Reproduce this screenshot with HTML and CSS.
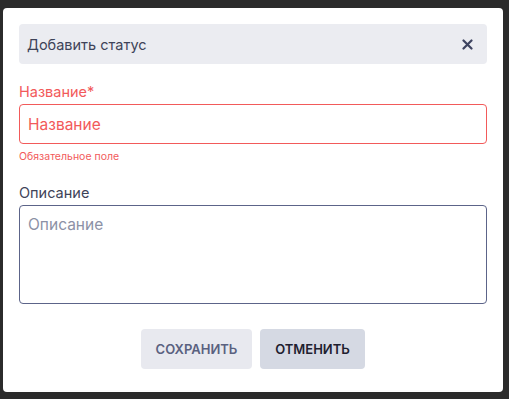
FILE: index.html
```html
<!DOCTYPE html>
<html lang="ru">
<head>
  <meta charset="UTF-8" />
  <meta name="viewport" content="width=device-width, initial-scale=1.0"/>
  <title>Добавить статус</title>
  <link rel="stylesheet" href="styles.css">
</head>
<body>

  <div class="backdrop">
    <div class="modal">
      <div class="modal-header">
        <span class="modal-title">Добавить статус</span>
        <button class="close" aria-label="Закрыть">
          <svg width="11" height="11" viewBox="0 0 11 11">
            <path d="M1.5 1.5 L9.5 9.5 M9.5 1.5 L1.5 9.5" stroke="#3d4360" stroke-width="2.2" stroke-linecap="round"/>
          </svg>
        </button>
      </div>

      <div class="field field-error">
        <label class="label" for="name">Название*</label>
        <input class="input" id="name" type="text" placeholder="Название">
        <div class="hint">Обязательное поле</div>
      </div>

      <div class="field">
        <label class="label" for="desc">Описание</label>
        <textarea class="input textarea" id="desc" placeholder="Описание"></textarea>
      </div>

      <div class="actions">
        <button class="btn btn-save">Сохранить</button>
        <button class="btn btn-cancel">Отменить</button>
      </div>
    </div>
  </div>

</body>
</html>
```

FILE: styles.css
```css
body {
  margin: 0;
  background: #2b2b2b;
  font-family: Inter, "Noto Sans", sans-serif;
  height: 399px;
  overflow: hidden;
}

.backdrop {
  padding: 8px 6px 0 3px;
}

.modal {
  background: #fff;
  border-radius: 4px;
  height: 384px;
  box-sizing: border-box;
  padding: 16px;
  display: flex;
  flex-direction: column;
}

.modal-header {
  background: #ebecf1;
  border-radius: 4px;
  height: 40px;
  display: flex;
  align-items: center;
  justify-content: space-between;
  padding: 0 14px 0 8px;
}

.modal-title {
  font-size: 14.5px;
  color: #3e4358;
}

.close {
  border: none;
  background: none;
  padding: 0;
  display: flex;
  cursor: pointer;
}

.field {
  display: flex;
  flex-direction: column;
}

.label {
  font-size: 14.5px;
  color: #3e4358;
  line-height: 18px;
  margin-top: 19px;
  margin-bottom: 3px;
}

.input {
  height: 40px;
  box-sizing: border-box;
  border: 1px solid #5c6489;
  border-radius: 4px;
  padding: 0 8px;
  font-family: inherit;
  font-size: 15.5px;
  color: #3e4358;
  outline: none;
}

.input::placeholder {
  color: #8c91a6;
}

.textarea {
  height: 99px;
  padding: 9px 8px;
  resize: none;
}

.field-error .label,
.field-error .hint {
  color: #f25a5a;
}

.field-error .input {
  border-color: #f25a5a;
}

.field-error .input::placeholder {
  color: #f25a5a;
}

.hint {
  font-size: 10.5px;
  margin-top: 6px;
  margin-bottom: 2px;
}

.actions {
  display: flex;
  justify-content: center;
  gap: 8px;
  margin-top: 25px;
}

.btn {
  height: 40px;
  border: none;
  border-radius: 4px;
  font-family: inherit;
  font-size: 13px;
  font-weight: 600;
  text-transform: uppercase;
  cursor: pointer;
}

.btn-save {
  width: 111px;
  background: #e8e9ef;
  color: #5a6180;
}

.btn-cancel {
  width: 105px;
  background: #d5d9e3;
  color: #1e2030;
}
```
